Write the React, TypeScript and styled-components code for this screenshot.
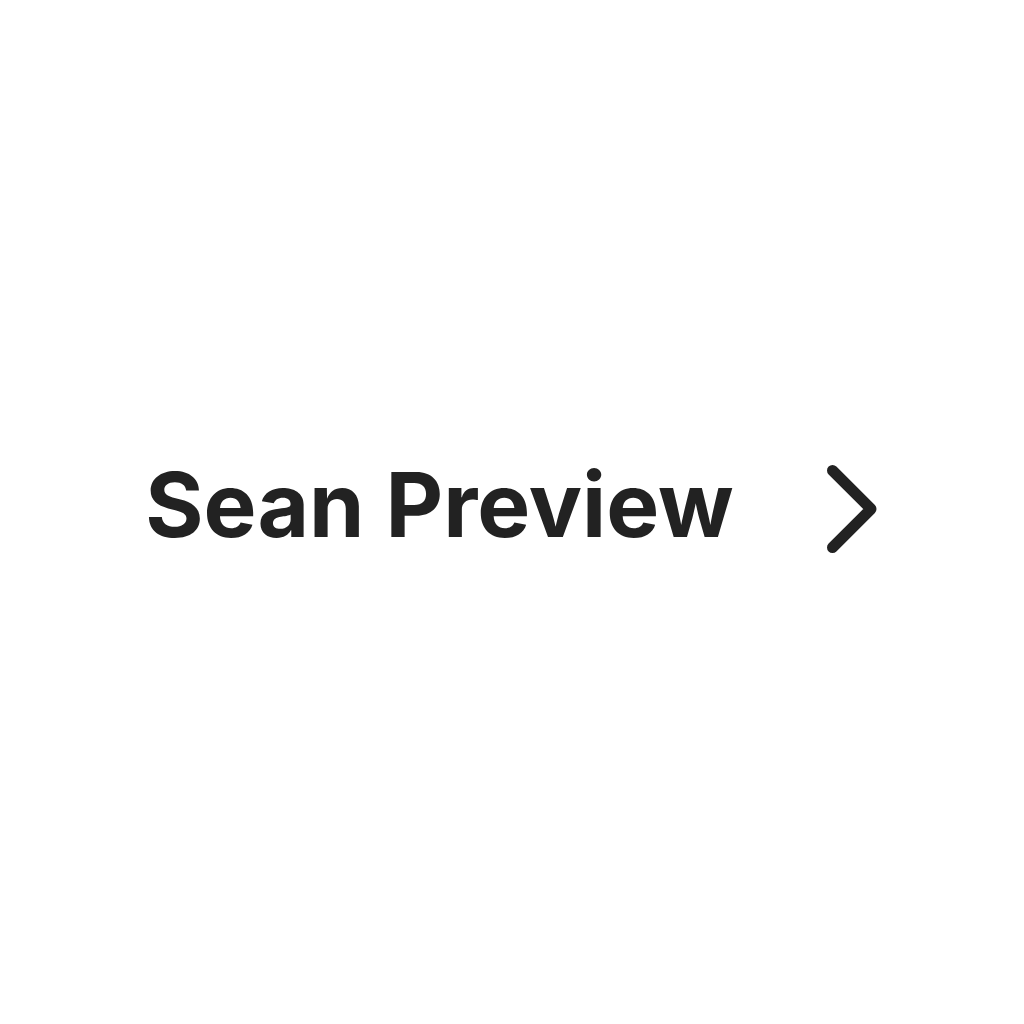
import React from "react";
import styled, { createGlobalStyle } from "styled-components";

const Global = createGlobalStyle`
  html, body { margin: 0; padding: 0; background: #ffffff; }
  body { font-family: Inter, "Noto Sans", sans-serif; }
`;

const Page = styled.div`
  width: 1024px;
  height: 1024px;
  display: flex;
  align-items: center;
  justify-content: center;
`;

const Row = styled.div`
  display: flex;
  align-items: center;
  gap: 93px;
  margin-top: -15px;
`;

const Title = styled.span`
  font-family: Inter, "Noto Sans", sans-serif;
  font-weight: 700;
  font-size: 89px;
  line-height: 1;
  color: #222222;
`;

const Chevron = styled.svg`
  width: 52px;
  height: 88px;
  display: block;
  margin-top: 8px;
`;

export default function App() {
  return (
    <>
      <Global />
      <Page>
        <Row>
          <Title>Sean Preview</Title>
          <Chevron viewBox="0 0 52 88">
            <path
              d="M5.5 5.5 L44 44 L5.5 82.5"
              fill="none"
              stroke="#222222"
              strokeWidth="11"
              strokeLinecap="round"
              strokeLinejoin="round"
            />
          </Chevron>
        </Row>
      </Page>
    </>
  );
}
